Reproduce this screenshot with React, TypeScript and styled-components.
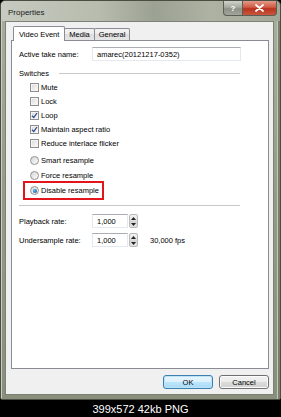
import styled, { createGlobalStyle, css } from 'styled-components';

const GlobalStyle = createGlobalStyle`
  html, body {
    margin: 0;
    padding: 0;
    background: #000;
  }
  body {
    font-family: "Liberation Sans", Arial, sans-serif;
  }
`;

const Page = styled.div`
  width: 281px;
  height: 417px;
  display: flex;
  flex-direction: column;
  background: #000;
`;

const Window = styled.div`
  height: 400px;
  box-sizing: border-box;
  display: flex;
  flex-direction: column;
  padding: 0 6px 4px 4px;
  border: 1px solid #4a4e42;
  border-radius: 5px 5px 2px 2px;
  background: linear-gradient(180deg, #a9ae9e 0%, #959a87 50%, #8a8f7c 100%);
  box-shadow: inset 1px 1px 0 #c9ccc0, inset -2px 0 0 #7a7f6c, inset -3px 0 0 #c4c7bb;
`;

const TitleBar = styled.div`
  height: 20px;
  display: flex;
  justify-content: space-between;
  align-items: flex-start;
  margin: 0 -6px 0 -4px;
  padding: 0 3px 0 7px;
  border-radius: 5px 5px 0 0;
  background: linear-gradient(
    90deg,
    #c6cac0 0%,
    #b7bcae 35%,
    #9ba193 55%,
    #adb2a3 75%,
    #a2a796 100%
  );
`;

const Title = styled.span`
  font-size: 8px;
  line-height: 24px;
  color: #1c1c1c;
`;

const CaptionButtons = styled.div`
  display: flex;
`;

const CaptionButton = styled.div<{ $close?: boolean }>`
  height: 15px;
  width: ${(p) => (p.$close ? '35px' : '19px')};
  box-sizing: border-box;
  display: flex;
  align-items: center;
  justify-content: center;
  color: #fff;
  font: bold 8px "Liberation Sans", Arial, sans-serif;
  border: 1px solid #5a5e55;
  border-top: none;
  ${(p) =>
    p.$close
      ? css`
          border-radius: 0 0 4px 0;
          background: linear-gradient(180deg, #e29a8a 0%, #cf5a44 45%, #b8321f 55%, #c9573e 100%);
        `
      : css`
          border-right: none;
          border-radius: 0 0 0 4px;
          background: linear-gradient(180deg, #cfd3cb 0%, #a5aaa0 45%, #8d9287 55%, #a1a69b 100%);
        `}
`;

const Client = styled.div`
  flex: 1;
  display: flex;
  flex-direction: column;
  background: #f0f0f0;
  border: 1px solid #7c8174;
  padding: 0 4px 0 5px;
`;

const Tabs = styled.div`
  display: flex;
  align-items: flex-end;
  height: 18px;
  padding-left: 2px;
`;

const Tab = styled.div<{ $active?: boolean }>`
  box-sizing: border-box;
  display: flex;
  align-items: center;
  justify-content: center;
  font-size: 7.5px;
  color: #000;
  border: 1px solid #898c95;
  border-bottom: none;
  border-radius: 2px 2px 0 0;
  ${(p) =>
    p.$active
      ? css`
          height: 15px;
          margin-bottom: -1px;
          padding: 0 5px;
          background: #fff;
          position: relative;
          z-index: 1;
        `
      : css`
          height: 12px;
          padding: 0 4px;
          margin-left: -1px;
          background: linear-gradient(180deg, #f3f3f3 0%, #ebebeb 50%, #dedede 50%, #e6e6e6 100%);
        `}
`;

const Panel = styled.div`
  flex: 1;
  background: #fff;
  border: 1px solid #898c95;
  padding: 6px 27px 0 7px;
  font-size: 7.5px;
  color: #000;
`;

const FieldRow = styled.div<{ $gap?: number }>`
  display: flex;
  align-items: center;
  height: 14px;
  margin-top: ${(p) => p.$gap ?? 0}px;
`;

const Label = styled.span`
  width: 73px;
  flex-shrink: 0;
`;

const TextBox = styled.div<{ $width: number }>`
  box-sizing: border-box;
  width: ${(p) => p.$width}px;
  height: 14px;
  display: flex;
  align-items: center;
  padding-left: 4px;
  border: 1px solid #e3e9ef;
  border-top-color: #abadb3;
  background: #fff;
`;

const Spinner = styled.div`
  box-sizing: border-box;
  width: 9px;
  height: 14px;
  margin-left: 1px;
  display: flex;
  flex-direction: column;
  border: 1px solid #b8b8b8;
  border-radius: 2px;
  background: linear-gradient(180deg, #f2f2f2 0%, #e0e0e0 50%, #d4d4d4 50%, #e6e6e6 100%);
`;

const SpinHalf = styled.div`
  flex: 1;
  display: flex;
  align-items: center;
  justify-content: center;
`;

const Unit = styled.span`
  margin-left: 12px;
`;

const GroupHeader = styled.div`
  display: flex;
  align-items: center;
  height: 10px;
  margin-top: 7px;
  gap: 10px;
`;

const Rule = styled.div`
  flex: 1;
  height: 1px;
  background: #c8c8c8;
  margin-right: 1px;
`;

const Separator = styled.div`
  height: 1px;
  background: #c8c8c8;
  margin: 7px 1px 0 0;
`;

const OptionList = styled.div<{ $gap: number; $row: number }>`
  display: flex;
  flex-direction: column;
  margin-top: ${(p) => p.$gap}px;
  padding-left: 6px;

  & > div {
    height: ${(p) => p.$row}px;
  }
`;

const Option = styled.div<{ $highlight?: boolean }>`
  display: flex;
  align-items: center;
  gap: 2px;
  width: fit-content;
  padding: 0 3px 0 5px;
  ${(p) =>
    p.$highlight &&
    css`
      outline: 2px solid #e3141c;
    `}
`;

const CheckBox = styled.div`
  box-sizing: border-box;
  width: 9px;
  height: 9px;
  display: flex;
  align-items: center;
  justify-content: center;
  border: 1px solid #8f8f8f;
  background: linear-gradient(135deg, #d8d8d8 0%, #f2f2f2 70%, #fbfbfb 100%);
  box-shadow: inset 0 0 0 1px #f4f4f4;
`;

const Radio = styled.div<{ $checked?: boolean }>`
  box-sizing: border-box;
  width: 9px;
  height: 9px;
  border-radius: 50%;
  display: flex;
  align-items: center;
  justify-content: center;
  border: 1px solid #929292;
  background: linear-gradient(135deg, #d4d4d4 0%, #f4f4f4 75%);

  &::after {
    content: '';
    width: 4px;
    height: 4px;
    border-radius: 50%;
    background: ${(p) =>
      p.$checked ? 'radial-gradient(circle at 40% 40%, #6fc3f0 0%, #1d74b8 55%, #0b3f70 100%)' : 'transparent'};
  }
`;

const ButtonBar = styled.div`
  display: flex;
  justify-content: flex-end;
  gap: 6px;
  padding: 6px 0 5px;
`;

const Button = styled.div<{ $default?: boolean }>`
  box-sizing: border-box;
  width: 50px;
  height: 14px;
  display: flex;
  align-items: center;
  justify-content: center;
  font-size: 7.5px;
  color: #000;
  border-radius: 3px;
  border: 1px solid ${(p) => (p.$default ? '#3c7fb1' : '#707070')};
  background: ${(p) =>
    p.$default
      ? 'linear-gradient(180deg, #eaf6fd 0%, #d9f0fc 50%, #bee6fd 50%, #a7d9f5 100%)'
      : 'linear-gradient(180deg, #f2f2f2 0%, #ebebeb 50%, #dddddd 50%, #cfcfcf 100%)'};
  box-shadow: inset 0 0 0 1px ${(p) => (p.$default ? '#bde3f6' : '#fcfcfc')};
`;

const ImageInfo = styled.div`
  flex: 1;
  display: flex;
  align-items: center;
  justify-content: center;
  color: #fff;
  font-size: 11px;
`;

const Check = () => (
  <svg width="7" height="7" viewBox="0 0 7 7">
    <path d="M1 3.8 L2.8 5.6 L6 1" fill="none" stroke="#2a4a8c" strokeWidth="1.3" />
  </svg>
);

const Arrow = ({ up }: { up?: boolean }) => (
  <svg width="5" height="3" viewBox="0 0 5 3">
    <path d={up ? 'M0 3 L2.5 0 L5 3 Z' : 'M0 0 L2.5 3 L5 0 Z'} fill="#222" />
  </svg>
);

const CloseIcon = () => (
  <svg width="9" height="8" viewBox="0 0 9 8">
    <path d="M1 1 L8 7 M8 1 L1 7" stroke="#fff" strokeWidth="1.8" strokeLinecap="round" />
  </svg>
);

const checkboxes = [
  { label: 'Mute', checked: false },
  { label: 'Lock', checked: false },
  { label: 'Loop', checked: true },
  { label: 'Maintain aspect ratio', checked: true },
  { label: 'Reduce interlace flicker', checked: false },
];

const radios = [
  { label: 'Smart resample', checked: false },
  { label: 'Force resample', checked: false },
  { label: 'Disable resample', checked: true },
];

const SpinField = ({ value }: { value: string }) => (
  <>
    <TextBox $width={36}>{value}</TextBox>
    <Spinner>
      <SpinHalf>
        <Arrow up />
      </SpinHalf>
      <SpinHalf>
        <Arrow />
      </SpinHalf>
    </Spinner>
  </>
);

export default function App() {
  return (
    <Page>
      <GlobalStyle />
      <Window>
        <TitleBar>
          <Title>Properties</Title>
          <CaptionButtons>
            <CaptionButton>?</CaptionButton>
            <CaptionButton $close>
              <CloseIcon />
            </CaptionButton>
          </CaptionButtons>
        </TitleBar>
        <Client>
          <Tabs>
            <Tab $active>Video Event</Tab>
            <Tab>Media</Tab>
            <Tab>General</Tab>
          </Tabs>
          <Panel>
            <FieldRow>
              <Label>Active take name:</Label>
              <TextBox $width={149}>amarec(20121217-0352)</TextBox>
            </FieldRow>
            <GroupHeader>
              Switches
              <Rule />
            </GroupHeader>
            <OptionList $gap={2} $row={14}>
              {checkboxes.map((c) => (
                <Option key={c.label}>
                  <CheckBox>{c.checked && <Check />}</CheckBox>
                  {c.label}
                </Option>
              ))}
            </OptionList>
            <OptionList $gap={3} $row={15}>
              {radios.map((r) => (
                <Option key={r.label} $highlight={r.checked}>
                  <Radio $checked={r.checked} />
                  {r.label}
                </Option>
              ))}
            </OptionList>
            <Separator />
            <FieldRow $gap={8}>
              <Label>Playback rate:</Label>
              <SpinField value="1,000" />
            </FieldRow>
            <FieldRow $gap={5}>
              <Label>Undersample rate:</Label>
              <SpinField value="1,000" />
              <Unit>30,000 fps</Unit>
            </FieldRow>
          </Panel>
          <ButtonBar>
            <Button $default>OK</Button>
            <Button>Cancel</Button>
          </ButtonBar>
        </Client>
      </Window>
      <ImageInfo>399x572 42kb PNG</ImageInfo>
    </Page>
  );
}
